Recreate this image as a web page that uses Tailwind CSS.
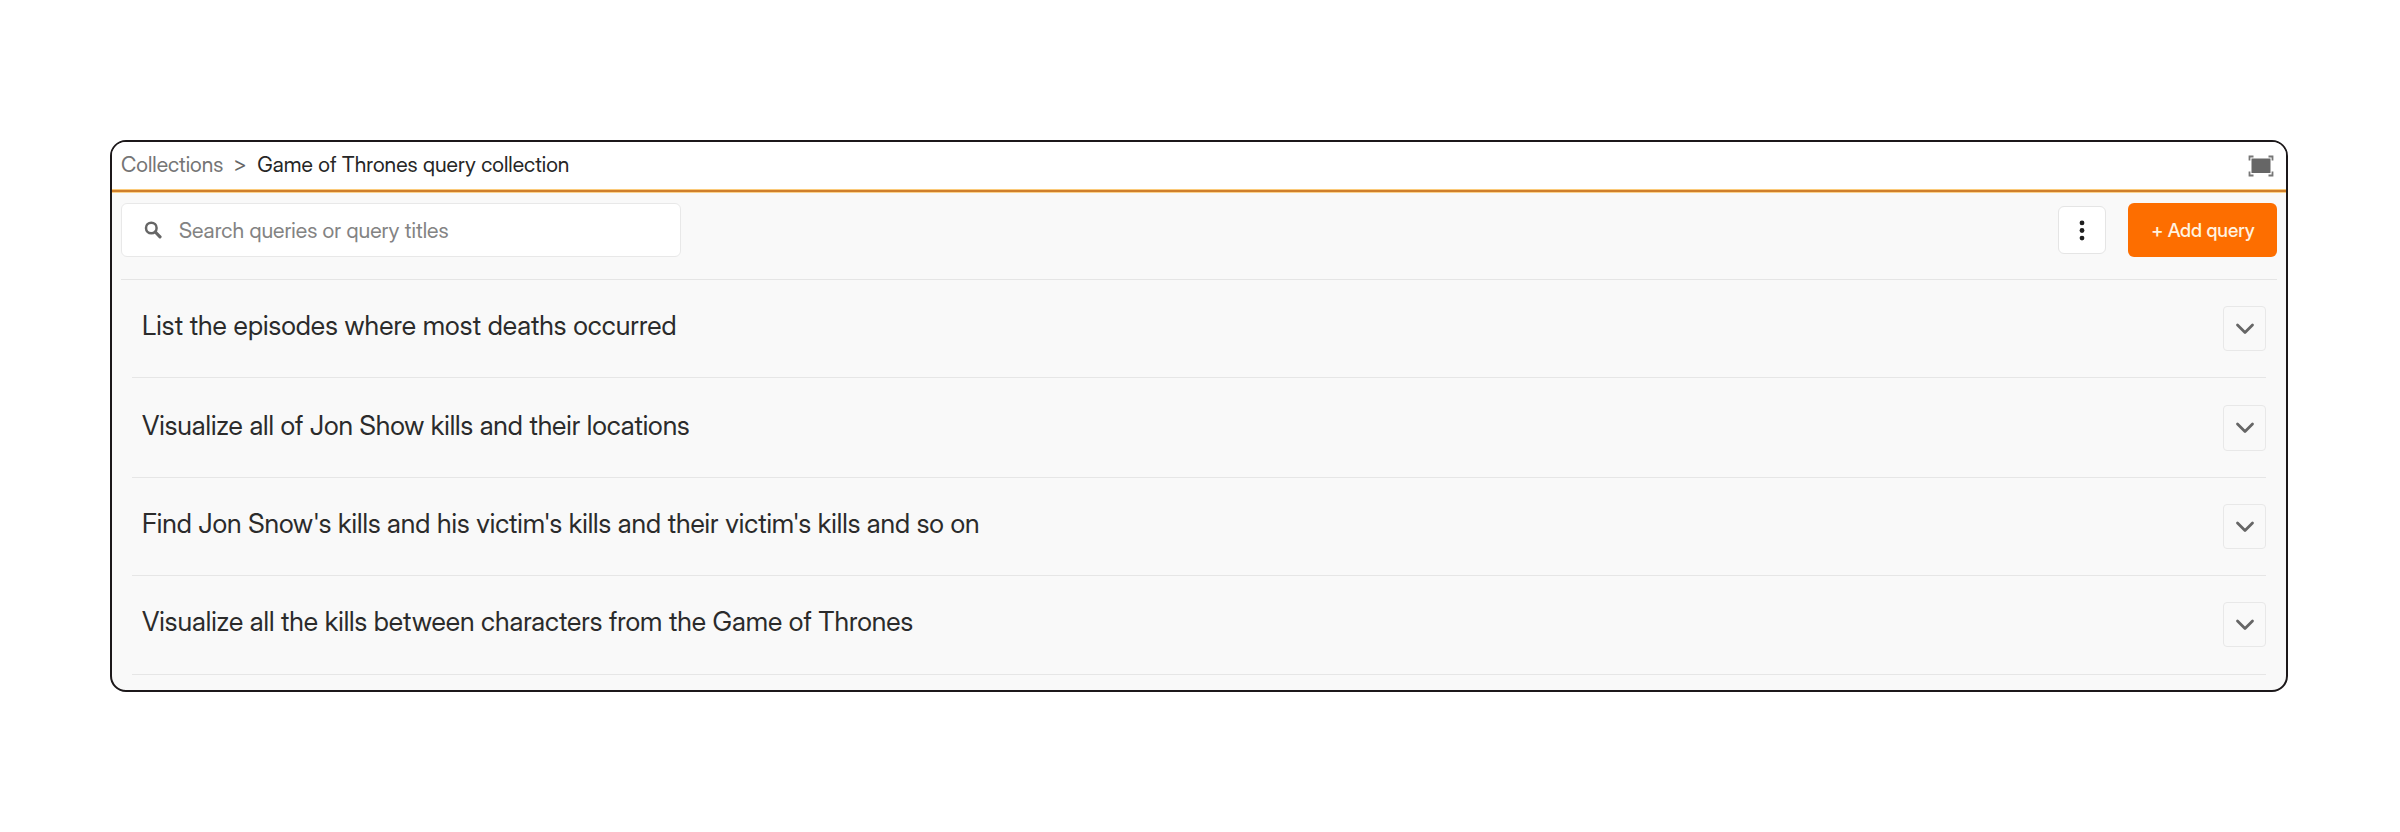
<!DOCTYPE html>
<html lang="en">
<head>
<meta charset="utf-8">
<title>Game of Thrones query collection</title>
<script src="https://cdn.jsdelivr.net/npm/@tailwindcss/browser@4"></script>
</head>
<body class="bg-white font-['Inter_Display','Inter',sans-serif]">
<div class="flex h-[832px] w-[2400px] items-center justify-center pr-[2px]">
  <main class="flex h-[552px] w-[2178px] flex-col overflow-hidden rounded-2xl border-2 border-[#1c181a] bg-[#f9f9f9]">
    <header class="flex h-[47px] shrink-0 items-center justify-between bg-white pr-[12px] pb-[3px] pl-[9px]">
      <nav class="flex items-center text-[21.2px] leading-6 text-[#262626]">
        <a class="text-[#757575]">Collections</a>
        <span class="ml-[10px] w-[24px] text-[#666]">&gt;</span>
        <span class="tracking-[0.02px]">Game of Thrones query collection</span>
      </nav>
      <svg class="mt-[4px] h-[22px] w-[26px]" viewBox="0 0 26 22" fill="none">
        <rect x="3.500" y="3.500" width="19" height="14.500" fill="#666"/>
        <path d="M1.500 5.500V1.500H5.500M20.500 1.500H24.500V5.500M24.500 16.500V20.500H20.500M5.500 20.500H1.500V16.500" stroke="#777" stroke-width="1.800"/>
      </svg>
    </header>
    <div class="h-1 shrink-0 border-y border-t-[#fbca7a] border-b-[#fbd28c] bg-[#cf7f2c]"></div>

    <section class="mr-[9px] ml-[9px] flex h-[87px] shrink-0 items-start border-b border-[#e5e5e5] pt-[10px]">
      <label class="flex h-[54px] w-[560px] items-center rounded-md border border-[#e8e8e8] bg-white pl-[22px]">
        <svg class="size-[18px]" viewBox="0 0 18 18" fill="none" stroke="#666" stroke-width="2.500">
          <circle cx="7.300" cy="7" r="5.300"/>
          <path d="M11.300 11L16 15.800" stroke-width="3.200" stroke-linecap="round"/>
        </svg>
        <span class="ml-[17px] text-[21.3px] leading-6 text-[#838383]">Search queries or query titles</span>
      </label>
      <button class="mt-[3px] ml-auto flex h-12 w-12 items-center justify-center rounded-md border border-[#e5e5e5] bg-white pr-px">
        <svg class="h-[22px] w-[6px]" viewBox="0 0 6 22" fill="#1f1f1f">
          <circle cx="3" cy="3.900" r="2.400"/><circle cx="3" cy="11.500" r="2.400"/><circle cx="3" cy="19.100" r="2.400"/>
        </svg>
      </button>
      <button class="ml-[22px] flex h-[54px] w-[149px] items-center justify-center rounded-md bg-[#fd6e00] pt-[2px] pl-px text-[19px] leading-6 font-medium tracking-[-0.03px] text-[#fff3e0]">+ Add query</button>
    </section>

    <ul class="mr-[20px] ml-[20px] shrink-0 text-[26.6px] leading-8 text-[#2b2b2b]">
      <li class="flex h-[98px] items-center justify-between border-b border-[#e6e6e6] pl-[10px]">
        <span class="pb-[8px] tracking-[0.04px]">List the episodes where most deaths occurred</span>
        <button class="flex h-[45px] w-[43px] items-center justify-center rounded-sm border border-[#e8e8e8]"><svg class="h-3 w-[20px]" viewBox="0 0 20 12" fill="none" stroke="#666" stroke-width="2.800" stroke-linecap="round" stroke-linejoin="round"><path d="M2.500 2L10 9.500L17.500 2"/></svg></button>
      </li>
      <li class="flex h-[100px] items-center justify-between border-b border-[#e6e6e6] pl-[10px]">
        <span class="pb-[6px] tracking-[-0.06px]">Visualize all of Jon Show kills and their locations</span>
        <button class="flex h-[46px] w-[43px] items-center justify-center rounded-sm border border-[#e8e8e8]"><svg class="h-3 w-[20px]" viewBox="0 0 20 12" fill="none" stroke="#666" stroke-width="2.800" stroke-linecap="round" stroke-linejoin="round"><path d="M2.500 2L10 9.500L17.500 2"/></svg></button>
      </li>
      <li class="flex h-[98px] items-center justify-between border-b border-[#e6e6e6] pl-[10px]">
        <span class="pb-[8px] tracking-[-0.03px]">Find Jon Snow's kills and his victim's kills and their victim's kills and so on</span>
        <button class="flex h-[45px] w-[43px] items-center justify-center rounded-sm border border-[#e8e8e8]"><svg class="h-3 w-[20px]" viewBox="0 0 20 12" fill="none" stroke="#666" stroke-width="2.800" stroke-linecap="round" stroke-linejoin="round"><path d="M2.500 2L10 9.500L17.500 2"/></svg></button>
      </li>
      <li class="flex h-[99px] items-center justify-between border-b border-[#e6e6e6] pl-[10px]">
        <span class="pb-[8px] tracking-[-0.02px]">Visualize all the kills between characters from the Game of Thrones</span>
        <button class="mb-[1px] flex h-[45px] w-[43px] items-center justify-center rounded-sm border border-[#e8e8e8]"><svg class="h-3 w-[20px]" viewBox="0 0 20 12" fill="none" stroke="#666" stroke-width="2.800" stroke-linecap="round" stroke-linejoin="round"><path d="M2.500 2L10 9.500L17.500 2"/></svg></button>
      </li>
    </ul>
  </main>
</div>
</body>
</html>
